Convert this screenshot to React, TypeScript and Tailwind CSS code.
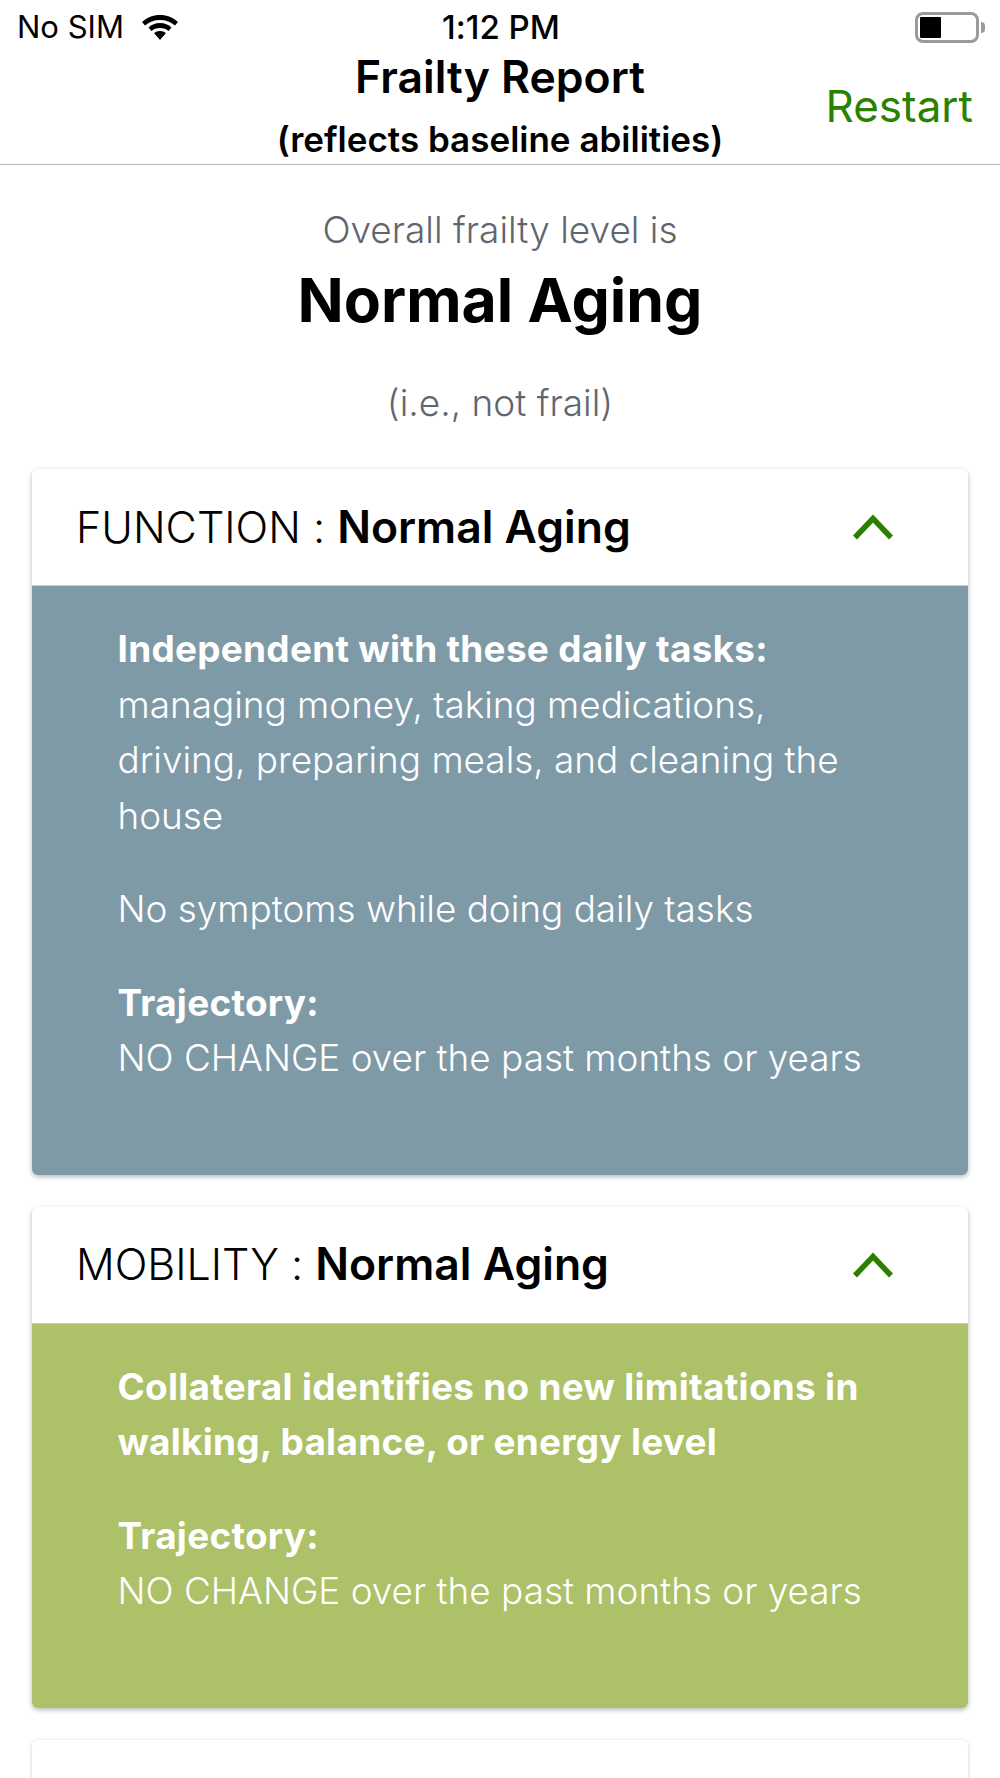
import React from "react";

function Chevron() {
  return (
    <svg width="42" height="26" viewBox="0 0 42 26" fill="none" className="shrink-0">
      <path d="M3 23.500 L21 4.500 L39 23.500" stroke="#2b8000" strokeWidth="5.500" />
    </svg>
  );
}

function Wifi() {
  return (
    <svg width="38" height="28" viewBox="0 2 38 28" fill="#000">
      <path d="M19 3C12 3 6 5.500 1 10l3 3.500C8 10 13 8 19 8s11 2 15 5.500l3-3.500C32 5.500 26 3 19 3z" />
      <path d="M19 11c-4.500 0-8.500 1.500-11.500 4.500l3 3.500c2-2 5-3 8.500-3s6.500 1 8.500 3l3-3.500C27.500 12.500 23.500 11 19 11z" />
      <path d="M19 19c-2.500 0-4.500.8-5.800 2.200L19 28l5.800-6.800C23.500 19.800 21.500 19 19 19z" />
    </svg>
  );
}

function Battery() {
  return (
    <div className="flex items-center">
      <div className="w-[64px] h-[31px] rounded-[8px] border-[3px] border-[#9a9a9a] p-[2px] flex">
        <div className="w-[21px] h-full bg-black rounded-[1px]" />
      </div>
      <div className="w-[4px] h-[11px] bg-[#9a9a9a] rounded-r-full ml-[2px]" />
    </div>
  );
}

function Card({ label, color, children }: { label: string; color: string; children: React.ReactNode }) {
  return (
    <section className="rounded-[6px] bg-white shadow-[0_2px_5px_rgba(0,0,0,0.28)] overflow-hidden">
      <div className="h-[117px] flex items-center justify-between pl-[44px] pr-[74px] border-b border-[#c8c8cc]">
        <div className="text-[43px] leading-none text-black font-[340]">
          {label} : <span className="font-semibold text-[44.5px]">Normal Aging</span>
        </div>
        <Chevron />
      </div>
      <div className={`${color} pb-[89px] pt-[35px] pl-[85.5px] pr-[86px] text-[36.9px] leading-[55.5px] font-light text-white [&_b]:font-bold [&_b]:tracking-[0.3px]`}>{children}</div>
    </section>
  );
}

export default function App() {
  return (
    <div className="w-[1000px] h-[1778px] overflow-hidden bg-white font-['Inter',sans-serif] [font-feature-settings:'calt'_0]">
      <header className="h-[165px] border-b border-[#b8b8b8] relative">
        <div className="h-[54px] pl-[17px] pr-[15px] pt-[1px] flex items-center justify-between">
          <div className="flex items-center gap-[17px] w-[300px] text-[31px] text-black">
            <span>No SIM</span>
            <Wifi />
          </div>
          <div className="font-medium text-[33px] text-black">1:12 PM</div>
          <div className="w-[300px] flex justify-end"><Battery /></div>
        </div>
        <div className="flex flex-col items-center font-semibold text-black">
          <div className="text-[44.5px] leading-[52px] -mt-[3px]">Frailty Report</div>
          <div className="text-[35px] leading-[40px] mt-[16px]">(reflects baseline abilities)</div>
        </div>
        <div className="absolute right-[27px] top-[78px] text-[44px] leading-[56px] text-[#2b8000]">Restart</div>
      </header>
      <main className="px-[32px]">
        <div className="flex flex-col items-center">
          <div className="mt-[41px] text-[37px] leading-[48px] font-light text-[#5f6670]">Overall frailty level is</div>
          <div className="mt-[11px] text-[60.7px] leading-[70px] font-bold text-black">Normal Aging</div>
          <div className="mt-[44px] text-[37px] leading-[48px] font-light text-[#5f6670]">(i.e., not frail)</div>
        </div>
        <div className="mt-[42px] flex flex-col gap-[32px]">
          <Card label="FUNCTION" color="bg-[#7f9aa7]">
            <p><b>Independent with these daily tasks:</b><br />managing money, taking medications, driving, preparing meals, and cleaning the house</p>
            <p className="mt-[38px]">No symptoms while doing daily tasks</p>
            <p className="mt-[38px]"><b>Trajectory:</b><br />NO CHANGE over the past months or years</p>
          </Card>
          <Card label="MOBILITY" color="bg-[#adc168]">
            <p><b>Collateral identifies no new limitations in walking, balance, or energy level</b></p>
            <p className="mt-[38px]"><b>Trajectory:</b><br />NO CHANGE over the past months or years</p>
          </Card>
          <section className="h-[100px] rounded-[6px] bg-white shadow-[0_1px_4px_rgba(0,0,0,0.2)]" />
        </div>
      </main>
    </div>
  );
}
